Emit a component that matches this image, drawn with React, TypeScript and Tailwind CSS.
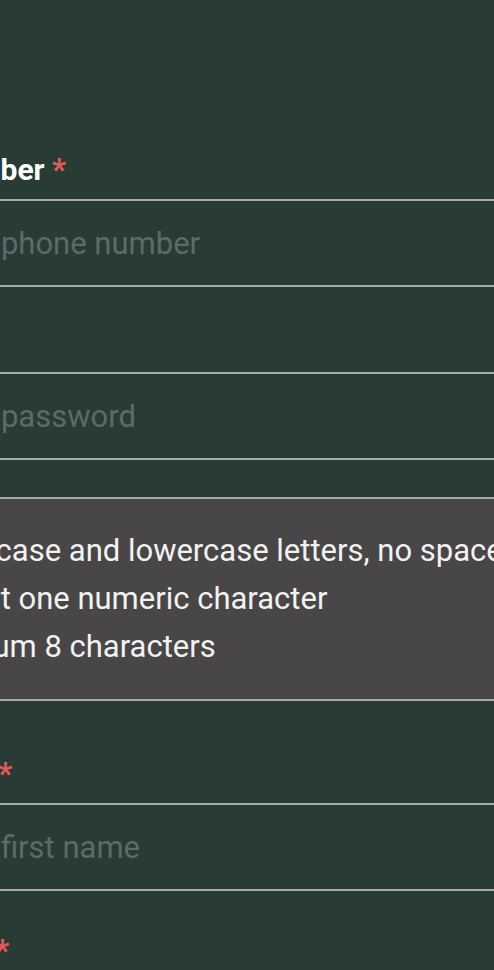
import type React from "react"

type FieldProps = {
  label: string
  placeholder: string
  type?: string
  className?: string
}

const Field: React.FC<FieldProps> = ({ label, placeholder, type = "text", className = "" }) => {
  return (
    <div className={className}>
      <label className="block h-[40px] text-[30px] leading-[40px] font-bold text-white mb-[9px]">
        {label} <span className="text-[31px] text-[#e35a5a]">*</span>
      </label>
      <input
        type={type}
        placeholder={placeholder}
        className="block h-[88px] w-full border-y-2 border-[#a4aba8] bg-transparent px-[11px] text-[31px] text-white placeholder:text-[#5e6a66] outline-none"
      />
    </div>
  )
}

export default function App() {
  const rules = [
    "Upper case and lowercase letters, no spaces",
    "At least one numeric character",
    "Minimum 8 characters",
  ]

  return (
    <div className="min-h-screen w-full overflow-hidden bg-[#283b35] font-['Roboto',sans-serif]">
      <div className="ml-[-157px] w-[760px] pt-[150px] pb-[40px]">
        <Field label="Phone Number" placeholder="Enter your phone number" type="tel" />
        <Field label="Password" placeholder="Enter your password" type="password" className="mt-[36px]" />

        <div className="mt-[37px] border-y-2 border-[#a4aba8] bg-[#484646] py-[28px]">
          <ul className="list-disc pl-[63px] text-[31px] leading-[48px] text-[#f2f2f2]">
            {rules.map((rule) => (
              <li key={rule}>{rule}</li>
            ))}
          </ul>
        </div>

        <Field label="First Name" placeholder="Enter your first name" className="mt-[53px]" />
        <Field label="Last Name" placeholder="Enter your last name" className="mt-[40px]" />
      </div>
    </div>
  )
}
